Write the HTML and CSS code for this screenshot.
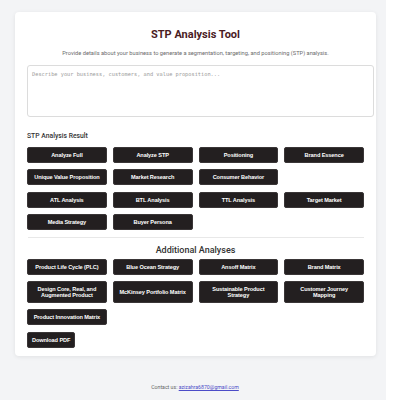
FILE: index.html
```html
<!DOCTYPE html>
<html lang="en">
<head>
<meta charset="utf-8">
<title>STP Analysis Tool</title>
<link rel="stylesheet" href="styles.css">
</head>
<body>
<div class="page">
  <main class="card">
    <h1 class="title">STP Analysis Tool</h1>
    <p class="subtitle">Provide details about your business to generate a segmentation, targeting, and positioning (STP) analysis.</p>
    <textarea class="input" placeholder="Describe your business, customers, and value proposition..."></textarea>
    <h2 class="result-heading">STP Analysis Result</h2>
    <div class="btn-grid">
      <button class="btn">Analyze Full</button>
      <button class="btn">Analyze STP</button>
      <button class="btn">Positioning</button>
      <button class="btn">Brand Essence</button>
      <button class="btn">Unique Value Proposition</button>
      <button class="btn">Market Research</button>
      <button class="btn">Consumer Behavior</button>
    </div>
    <div class="btn-grid group">
      <button class="btn">ATL Analysis</button>
      <button class="btn">BTL Analysis</button>
      <button class="btn">TTL Analysis</button>
      <button class="btn">Target Market</button>
      <button class="btn">Media Strategy</button>
      <button class="btn">Buyer Persona</button>
    </div>
    <hr class="divider">
    <h2 class="section-title">Additional Analyses</h2>
    <div class="btn-grid extra">
      <button class="btn">Product Life Cycle (PLC)</button>
      <button class="btn">Blue Ocean Strategy</button>
      <button class="btn">Ansoff Matrix</button>
      <button class="btn">Brand Matrix</button>
      <button class="btn">Design Core, Real, and Augmented Product</button>
      <button class="btn">McKinsey Portfolio Matrix</button>
      <button class="btn">Sustainable Product Strategy</button>
      <button class="btn">Customer Journey Mapping</button>
      <button class="btn">Product Innovation Matrix</button>
    </div>
    <button class="btn pdf">Download PDF</button>
  </main>
  <footer class="footer">Contact us: <a href="#" class="mail">azizahra6870@gmail.com</a></footer>
</div>
</body>
</html>
```
FILE: styles.css
```css
html, body {
  margin: 0;
  padding: 0;
  background: #ffffff;
}

body {
  font-family: Roboto, "Liberation Sans", sans-serif;
}

.page {
  width: 386px;
  min-height: 400px;
  background: #f3f4f6;
  padding-top: 12px;
  box-sizing: border-box;
  display: flex;
  flex-direction: column;
}

.card {
  margin-left: 15px;
  width: 361px;
  box-sizing: border-box;
  background: #ffffff;
  border-radius: 4px;
  box-shadow: 0 1px 4px rgba(0, 0, 0, 0.08);
  padding: 16px 12px 8px 12px;
  display: flex;
  flex-direction: column;
  align-items: stretch;
}

.title {
  margin: 0;
  font-size: 11px;
  line-height: 14px;
  font-weight: 700;
  color: #4b1c1f;
  text-align: center;
}

.subtitle {
  margin: 7px 0 0 0;
  font-size: 5.7px;
  line-height: 8px;
  color: #6b6b6b;
  text-align: center;
}

.input {
  margin-top: 8px;
  width: 100%;
  box-sizing: content-box;
  height: 40px;
  padding: 5px 4px;
  border: 1px solid #dcdcdc;
  border-radius: 3px;
  font-family: "DejaVu Sans Mono", "Liberation Mono", monospace;
  font-size: 5.3px;
  resize: none;
  background: #fff;
}

.input::placeholder {
  color: #9a9a9a;
}

.result-heading {
  margin: 14px 0 0 0;
  font-size: 6.8px;
  line-height: 10px;
  font-weight: 500;
  color: #333333;
}

.btn-grid {
  margin-top: 6px;
  display: grid;
  grid-template-columns: repeat(4, 1fr);
  gap: 6px;
}

.btn-grid.group {
  margin-top: 7px;
}

.btn-grid.extra {
  margin-top: 3px;
}

.btn {
  min-height: 16px;
  margin: 0;
  padding: 3.5px 5px;
  box-sizing: border-box;
  display: flex;
  align-items: center;
  justify-content: center;
  text-align: center;
  background: #231f20;
  color: #ffffff;
  border: 1px solid #3a3637;
  border-radius: 2px;
  font-family: "Liberation Sans", Arial, sans-serif;
  font-weight: 700;
  font-size: 5.6px;
  line-height: 6.5px;
  letter-spacing: -0.1px;
}

.divider {
  margin: 7px 0 0 1px;
  border: 0;
  border-top: 1px solid #e8e8e8;
  width: 336px;
}

.section-title {
  margin: 6px 0 0 0;
  font-size: 9px;
  line-height: 12px;
  font-weight: 500;
  color: #333333;
  text-align: center;
}

.pdf {
  margin-top: 7px;
  align-self: flex-start;
  padding: 3.5px 4px;
}

.footer {
  margin-top: 27px;
  text-align: center;
  font-size: 5.2px;
  line-height: 8px;
  color: #666666;
  padding-left: 4px;
}

.mail {
  color: #4c4cc8;
  text-decoration: underline;
}
```
